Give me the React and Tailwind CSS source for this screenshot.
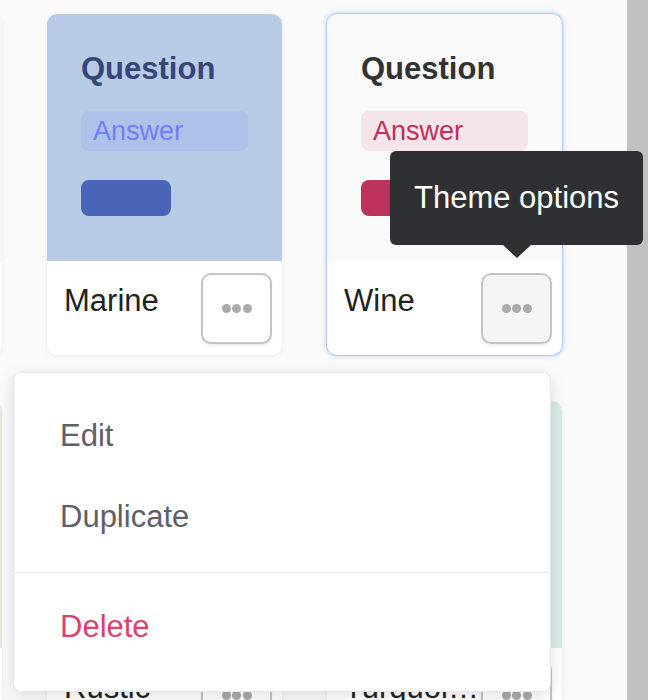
const themes = [
  { name: 'Classic', top: 'bg-[#f7f7f7]', title: 'text-[#333]', pill: 'bg-[#e9e9e9]', pillText: 'text-[#666]', bar: 'bg-[#555]' },
  { name: 'Marine', top: 'bg-[#b8cbe4]', title: 'text-[#36467a]', pill: 'bg-[#adc2e8]', pillText: 'text-[#7080f4]', bar: 'bg-[#4a64b8]' },
  { name: 'Wine', top: 'bg-[#f9f9f9]', title: 'text-[#333]', pill: 'bg-[#f5e4ea]', pillText: 'text-[#be2f5c]', bar: 'bg-[#bc335b]', active: true },
  { name: 'Forest', top: 'bg-[#dfe9dc]', title: 'text-[#2f4a2c]', pill: 'bg-[#cfe0cb]', pillText: 'text-[#4b7a45]', bar: 'bg-[#4b7a45]' },
  { name: 'Rustic', top: 'bg-[#efe3d6]', title: 'text-[#5a3e2b]', pill: 'bg-[#e6d3c0]', pillText: 'text-[#a0603a]', bar: 'bg-[#a0603a]' },
  { name: 'Turquoise', top: 'bg-[#d6ebe9]', title: 'text-[#225a57]', pill: 'bg-[#c3e2df]', pillText: 'text-[#2d8f88]', bar: 'bg-[#2d8f88]' },
];

function Dots() {
  return (
    <span className="flex items-center gap-[1.5px]">
      <span className="h-[9px] w-[9px] rounded-full bg-[#aaaaaa]" />
      <span className="h-[9px] w-[9px] rounded-full bg-[#aaaaaa]" />
      <span className="h-[9px] w-[9px] rounded-full bg-[#aaaaaa]" />
    </span>
  );
}

function ThemeCard({ theme }) {
  const ring = theme.active
    ? 'shadow-[0_0_0_1px_#aecbfb,0_0_6px_rgba(120,165,245,0.6)]'
    : 'shadow-[0_1px_5px_rgba(0,0,0,0.07)]';

  return (
    <div className={`flex h-[341px] flex-col overflow-hidden rounded-[10px] bg-white ${ring}`}>
      <div className={`h-[247px] shrink-0 px-[34px] pt-[37px] ${theme.top}`}>
        <p className={`text-[31px] font-bold leading-[36px] ${theme.title}`}>Question</p>
        <div className={`mt-[24px] flex h-[40px] w-[167px] items-center rounded-[8px] pl-[12px] text-[27px] ${theme.pill} ${theme.pillText}`}>
          Answer
        </div>
        <div className={`mt-[29px] h-[36px] w-[90px] rounded-[8px] ${theme.bar}`} />
      </div>
      <div className="flex flex-1 items-center pl-[17px] pr-[10px]">
        <span className="mr-[1px] min-w-0 flex-1 truncate pb-[14px] text-[31px] text-[#222]">{theme.name}</span>
        <button
          type="button"
          className={`flex h-[71px] w-[71px] shrink-0 items-center justify-center rounded-[10px] border-2 border-[#c4c4c4] shadow-[0_2px_2px_rgba(0,0,0,0.08)] ${theme.active ? 'bg-[#f4f4f4]' : 'bg-white'}`}
        >
          <Dots />
        </button>
      </div>
    </div>
  );
}

export default function App() {
  return (
    <div className="relative flex h-[700px] w-[648px] overflow-hidden bg-[#fafafa] font-['Liberation_Sans',Arial,sans-serif]">
      <main className="min-w-0 flex-1 overflow-hidden">
        <div className="ml-[-233px] mt-[14px] grid grid-cols-[repeat(3,235px)] gap-x-[45px] gap-y-[46px]">
          {themes.map((theme) => (
            <ThemeCard key={theme.name} theme={theme} />
          ))}
        </div>
      </main>
      <div className="w-px shrink-0 bg-white" />
      <div className="w-[21px] shrink-0 bg-[#c1c1c1]" />

      {/* tooltip over the Wine options button */}
      <div className="absolute left-[390px] top-[151px] flex h-[94px] w-[253px] items-center justify-center rounded-[6px] bg-[#2f3033] text-[31px] text-white">
        Theme options
        <span className="absolute left-[113px] top-full h-0 w-0 border-l-[14px] border-r-[14px] border-t-[13px] border-l-transparent border-r-transparent border-t-[#2f3033]" />
      </div>

      {/* open options menu */}
      <div className="absolute left-[13px] top-[372px] w-[538px] rounded-[8px] border border-[#e6e6ee] bg-white py-[23px] shadow-[0_4px_16px_rgba(0,0,0,0.12)]">
        <div className="flex h-[81px] items-center pl-[46px] text-[31px] text-[#5f6067]">Edit</div>
        <div className="flex h-[81px] items-center pl-[46px] text-[31px] text-[#5f6067]">Duplicate</div>
        <div className="my-[14px] h-px bg-[#e8e8ee]" />
        <div className="flex h-[81px] items-center pl-[46px] text-[31px] text-[#dc4168]">Delete</div>
      </div>
    </div>
  );
}
